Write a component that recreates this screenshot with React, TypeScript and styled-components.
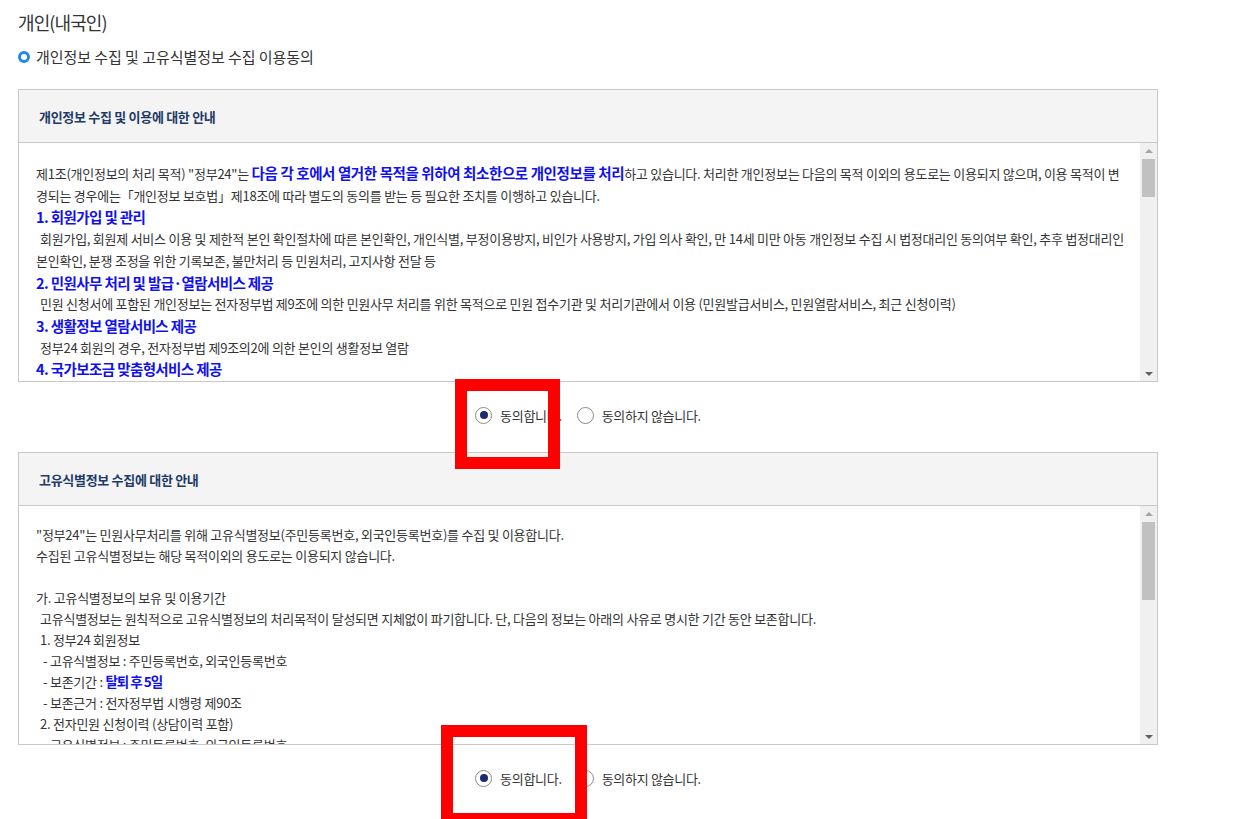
import styled, { createGlobalStyle } from "styled-components";
import { ReactNode } from "react";

const GlobalStyle = createGlobalStyle`
    html, body {
        margin: 0;
        padding: 0;
        background: #ffffff;
        font-family: "Noto Sans CJK KR", "Noto Sans", sans-serif;
        color: #333333;
    }
`;

const Page = styled.div`
    position: relative;
    width: 1140px;
    padding: 10px 0 0 18px;
`;

const PageTitle = styled.h2`
    margin: 0;
    font-size: 18px;
    font-weight: 400;
    line-height: 24px;
    letter-spacing: -0.9px;
    color: #333333;
`;

const SectionTitle = styled.h3`
    display: flex;
    align-items: center;
    gap: 6px;
    margin: 12px 0 0;
    font-size: 15px;
    font-weight: 400;
    line-height: 22px;
    letter-spacing: -0.05px;
    color: #333333;
`;

const BulletRing = styled.span`
    width: 6px;
    height: 6px;
    border: 3px solid #2288e8;
    border-radius: 50%;
    flex: none;
`;

const Panel = styled.section<{ $first?: boolean }>`
    margin-top: ${(p) => (p.$first ? "21px" : "0")};
    border: 1px solid #c8c8c8;
    background: #ffffff;
`;

const PanelHeader = styled.div`
    height: 52px;
    display: flex;
    align-items: center;
    padding-left: 20px;
    background: #f4f4f4;
    border-bottom: 1px solid #c8c8c8;
    font-size: 13px;
    font-weight: 700;
    letter-spacing: -0.3px;
    color: #1e3a66;
`;

const PanelBody = styled.div`
    display: flex;
    height: 238px;
`;

const ScrollText = styled.div<{ $top: number; $lh: number }>`
    flex: 1;
    overflow: hidden;
    padding: ${(p) => p.$top}px 0 0 17px;
    font-size: 13px;
    line-height: ${(p) => p.$lh}px;
    letter-spacing: -0.25px;
    color: #333333;
`;

const Line = styled.div<{ $indent?: number }>`
    white-space: pre;
    padding-left: ${(p) => p.$indent ?? 0}px;
    min-height: 1em;
`;

const Heading = styled.div`
    white-space: pre;
    font-size: 14.5px;
    font-weight: 700;
    letter-spacing: -0.6px;
    color: #1010f0;
`;

const Strong = styled.b<{ $big?: boolean }>`
    font-size: ${(p) => (p.$big ? "14.5px" : "13.5px")};
    font-weight: 700;
    letter-spacing: ${(p) => (p.$big ? "-0.4px" : "-1px")};
    color: #1010f0;
`;

const ScrollBar = styled.div`
    width: 17px;
    flex: none;
    display: flex;
    flex-direction: column;
    align-items: center;
    background: #f0f0f0;
`;

const ArrowBox = styled.div`
    height: 15px;
    width: 100%;
    display: flex;
    align-items: center;
    justify-content: center;
`;

const Arrow = styled.span<{ $down?: boolean }>`
    width: 0;
    height: 0;
    border-left: 4px solid transparent;
    border-right: 4px solid transparent;
    ${(p) =>
        p.$down
            ? "border-top: 4px solid #606060;"
            : "border-bottom: 4px solid #a3a3a3;"}
`;

const Track = styled.div`
    flex: 1;
    width: 100%;
    padding: 1px 2px 0 2px;
    box-sizing: border-box;
`;

const Thumb = styled.div<{ $h: number }>`
    height: ${(p) => p.$h}px;
    background: #c1c1c1;
`;

const RadioRow = styled.div`
    height: 70px;
    box-sizing: border-box;
    padding-bottom: 4px;
    display: flex;
    align-items: center;
    justify-content: center;
    gap: 15px;
`;

const RadioLabel = styled.label`
    display: flex;
    align-items: center;
    gap: 8px;
    font-size: 13px;
    letter-spacing: -0.3px;
    color: #333333;
    cursor: pointer;
`;

const RadioCircle = styled.span<{ $checked?: boolean }>`
    width: 15px;
    height: 15px;
    border: 1px solid #8a8a8a;
    border-radius: 50%;
    background: #ffffff;
    display: flex;
    align-items: center;
    justify-content: center;
    &::after {
        content: "";
        width: 8px;
        height: 8px;
        border-radius: 50%;
        background: ${(p) => (p.$checked ? "#1b2a72" : "transparent")};
    }
`;

const CheckLine = styled.div`
    display: flex;
    align-items: center;
    gap: 5px;
    font-size: 13px;
    letter-spacing: -0.4px;
    line-height: 20px;
`;

const CheckBox = styled.span`
    width: 11px;
    height: 11px;
    border: 1px solid #777777;
    border-radius: 2px;
`;

const Highlight = styled.div<{ $x: number; $y: number; $w: number; $h: number }>`
    position: absolute;
    left: ${(p) => p.$x}px;
    top: ${(p) => p.$y}px;
    width: ${(p) => p.$w}px;
    height: ${(p) => p.$h}px;
    box-sizing: border-box;
    border: 12px solid #ff0000;
    pointer-events: none;
`;

interface AgreeBoxProps {
    title: string;
    first?: boolean;
    thumb: number;
    top: number;
    lh: number;
    children: ReactNode;
}

const AgreeBox = ({ title, first, thumb, top, lh, children }: AgreeBoxProps) => (
    <Panel $first={first}>
        <PanelHeader>{title}</PanelHeader>
        <PanelBody>
            <ScrollText $top={top} $lh={lh}>{children}</ScrollText>
            <ScrollBar>
                <ArrowBox>
                    <Arrow />
                </ArrowBox>
                <Track>
                    <Thumb $h={thumb} />
                </Track>
                <ArrowBox>
                    <Arrow $down />
                </ArrowBox>
            </ScrollBar>
        </PanelBody>
    </Panel>
);

const AgreeRadios = ({ name }: { name: string }) => (
    <RadioRow>
        <RadioLabel>
            <RadioCircle $checked />
            동의합니다.
        </RadioLabel>
        <RadioLabel>
            <RadioCircle />
            동의하지 않습니다.
        </RadioLabel>
        <input type="hidden" name={name} value="Y" />
    </RadioRow>
);

export default function App() {
    return (
        <>
            <GlobalStyle />
            <Page>
                <PageTitle>개인(내국인)</PageTitle>
                <SectionTitle>
                    <BulletRing />
                    개인정보 수집 및 고유식별정보 수집 이용동의
                </SectionTitle>

                <AgreeBox title="개인정보 수집 및 이용에 대한 안내" first thumb={38} top={19} lh={21.7}>
                    <Line>
                        제1조(개인정보의 처리 목적) "정부24"는 <Strong $big>다음 각 호에서 열거한 목적을 위하여 최소한으로 개인정보를 처리</Strong>하고 있습니다. 처리한 개인정보는 다음의 목적 이외의 용도로는 이용되지 않으며, 이용 목적이 변
                    </Line>
                    <Line>경되는 경우에는「개인정보 보호법」제18조에 따라 별도의 동의를 받는 등 필요한 조치를 이행하고 있습니다.</Line>
                    <Heading>1. 회원가입 및 관리</Heading>
                    <Line $indent={4}>회원가입, 회원제 서비스 이용 및 제한적 본인 확인절차에 따른 본인확인, 개인식별, 부정이용방지, 비인가 사용방지, 가입 의사 확인, 만 14세 미만 아동 개인정보 수집 시 법정대리인 동의여부 확인, 추후 법정대리인</Line>
                    <Line>본인확인, 분쟁 조정을 위한 기록보존, 불만처리 등 민원처리, 고지사항 전달 등</Line>
                    <Heading>2. 민원사무 처리 및 발급·열람서비스 제공</Heading>
                    <Line $indent={4}>민원 신청서에 포함된 개인정보는 전자정부법 제9조에 의한 민원사무 처리를 위한 목적으로 민원 접수기관 및 처리기관에서 이용 (민원발급서비스, 민원열람서비스, 최근 신청이력)</Line>
                    <Heading>3. 생활정보 열람서비스 제공</Heading>
                    <Line $indent={4}>정부24 회원의 경우, 전자정부법 제9조의2에 의한 본인의 생활정보 열람</Line>
                    <Heading>4. 국가보조금 맞춤형서비스 제공</Heading>
                    <Line $indent={4}>국가보조금 맞춤형서비스 신청 시 신청자 및 가구원의 수급자격 확인</Line>
                </AgreeBox>

                <AgreeRadios name="agree1" />

                <AgreeBox title="고유식별정보 수집에 대한 안내" thumb={78} top={18} lh={21}>
                    <Line>"정부24"는 민원사무처리를 위해 고유식별정보(주민등록번호, 외국인등록번호)를 수집 및 이용합니다.</Line>
                    <Line>수집된 고유식별정보는 해당 목적이외의 용도로는 이용되지 않습니다.</Line>
                    <Line> </Line>
                    <Line>가. 고유식별정보의 보유 및 이용기간</Line>
                    <Line $indent={4}>고유식별정보는 원칙적으로 고유식별정보의 처리목적이 달성되면 지체없이 파기합니다. 단, 다음의 정보는 아래의 사유로 명시한 기간 동안 보존합니다.</Line>
                    <Line $indent={4}>1. 정부24 회원정보</Line>
                    <Line $indent={7}>- 고유식별정보 : 주민등록번호, 외국인등록번호</Line>
                    <Line $indent={7}>
                        - 보존기간 : <Strong>탈퇴 후 5일</Strong>
                    </Line>
                    <Line $indent={7}>- 보존근거 : 전자정부법 시행령 제90조</Line>
                    <Line $indent={4}>2. 전자민원 신청이력 (상담이력 포함)</Line>
                    <Line $indent={7}>- 고유식별정보 : 주민등록번호, 외국인등록번호</Line>
                </AgreeBox>

                <AgreeRadios name="agree2" />

                <CheckLine>
                    <CheckBox />
                    대리인의 프로그램 적용
                </CheckLine>

                <Highlight $x={455} $y={379} $w={105} $h={90} />
                <Highlight $x={441} $y={725} $w={146} $h={100} />
            </Page>
        </>
    );
}
